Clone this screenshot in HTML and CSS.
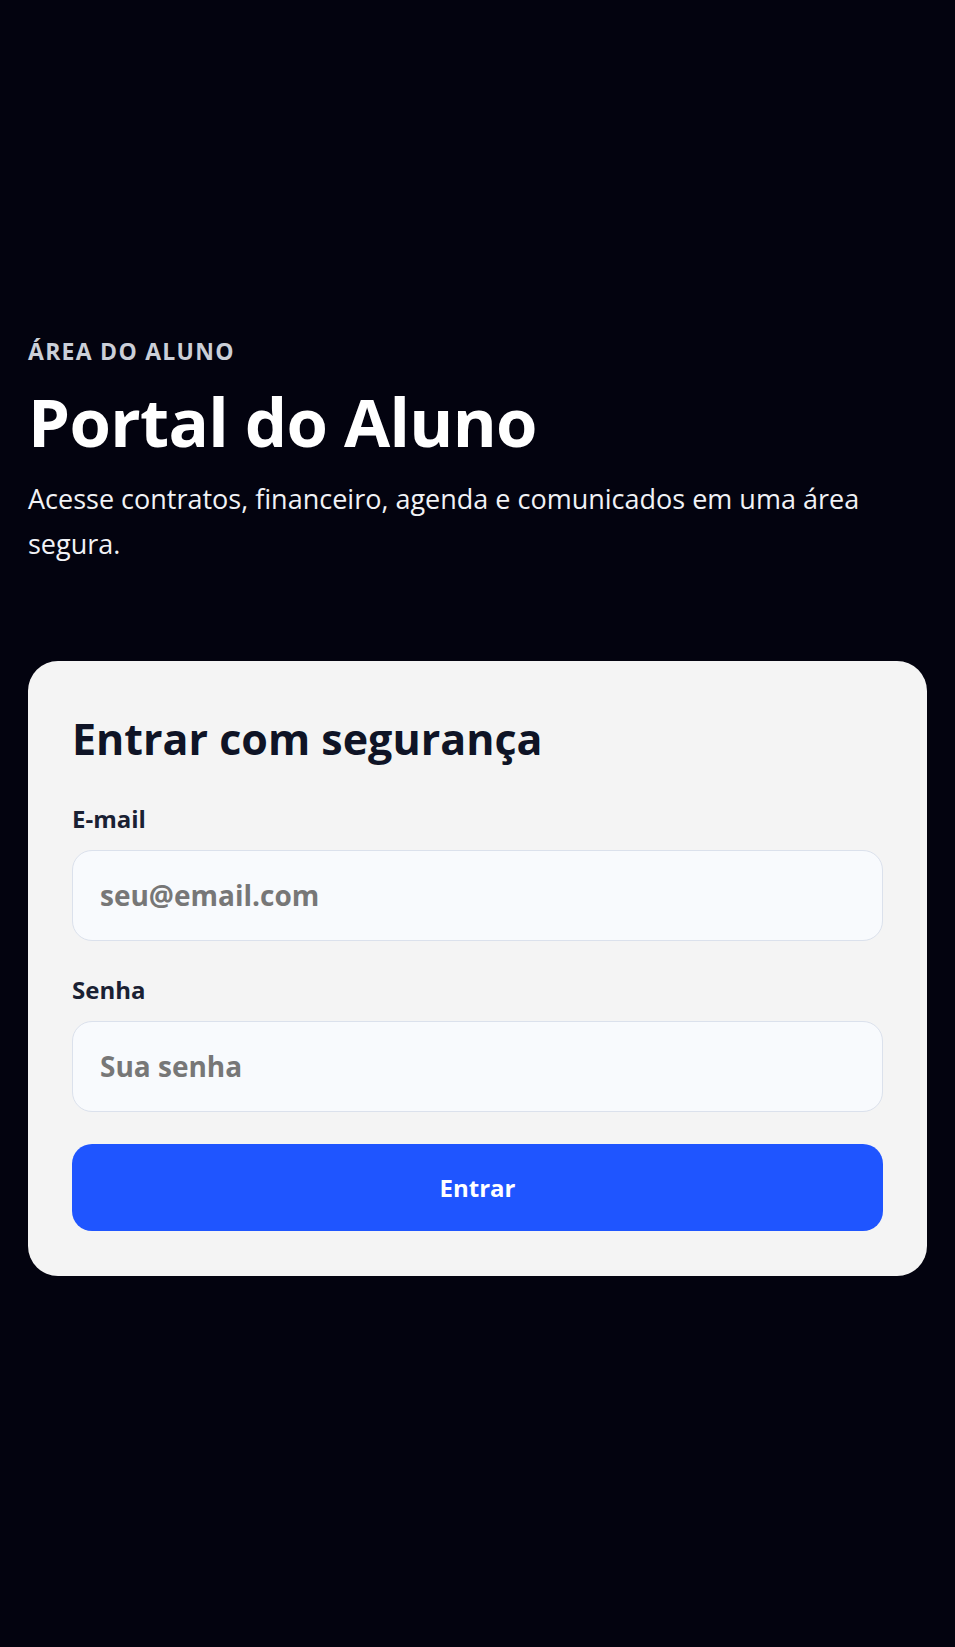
FILE: index.html
```html
<!DOCTYPE html>
<html lang="pt-BR">
<head>
    <meta charset="UTF-8">
    <meta name="viewport" content="width=device-width, initial-scale=1.0">
    <title>Portal do Aluno</title>
    <link rel="stylesheet" href="styles.css">
</head>
<body>
    <main class="page">
        <header class="hero">
            <span class="eyebrow">Área do aluno</span>
            <h1>Portal do Aluno</h1>
            <p>Acesse contratos, financeiro, agenda e comunicados em uma área segura.</p>
        </header>

        <form class="card" onsubmit="return false;">
            <h2>Entrar com segurança</h2>
            <div class="field">
                <label for="email">E-mail</label>
                <input type="email" id="email" placeholder="seu@email.com">
            </div>
            <div class="field">
                <label for="senha">Senha</label>
                <input type="password" id="senha" placeholder="Sua senha">
            </div>
            <button type="submit">Entrar</button>
        </form>
    </main>
</body>
</html>
```

FILE: styles.css
```css
/* Base */
* {
    box-sizing: border-box;
}

body {
    margin: 0;
    background-color: #03030f;
    font-family: "Open Sans", "Noto Sans", Arial, sans-serif;
    color: #fff;
}

.page {
    min-height: 100vh;
    display: flex;
    flex-direction: column;
    justify-content: center;
    padding: 0 28px 36px;
}

/* Hero */
.hero {
    margin-bottom: 95px;
}

.eyebrow {
    display: block;
    font-size: 23px;
    font-weight: 700;
    text-transform: uppercase;
    letter-spacing: 0.055em;
    color: #cbcfd8;
    line-height: 1.4;
}

.hero h1 {
    margin: 15px 0 16px;
    font-size: 67px;
    line-height: 1.15;
    font-weight: 700;
    letter-spacing: -0.01em;
}

.hero p {
    margin: 0;
    font-size: 27px;
    line-height: 1.667;
    color: #f1f2f6;
    max-width: 860px;
}

/* Card */
.card {
    background-color: #f4f4f4;
    border-radius: 30px;
    padding: 52px 44px 45px;
    display: flex;
    flex-direction: column;
    gap: 32px;
    color: #111827;
}

.card h2 {
    margin: 0 0 6px;
    font-size: 43px;
    line-height: 1.2;
    font-weight: 700;
    color: #0f1426;
}

.field {
    display: flex;
    flex-direction: column;
    gap: 14px;
}

.field label {
    font-size: 24px;
    line-height: 1.4;
    font-weight: 700;
    color: #1a2133;
}

.field input {
    height: 91px;
    padding: 0 27px;
    border: 1px solid #dbe1ec;
    border-radius: 20px;
    background-color: #f8fafd;
    font-family: inherit;
    font-size: 28px;
    font-weight: 700;
    color: #1a2133;
}

.field input::placeholder {
    color: #777;
}

button {
    height: 87px;
    border: none;
    border-radius: 20px;
    background-color: #1f55ff;
    color: #fff;
    font-family: inherit;
    font-size: 24px;
    font-weight: 700;
    cursor: pointer;
}

button:hover {
    background-color: #1648e6;
}
```
